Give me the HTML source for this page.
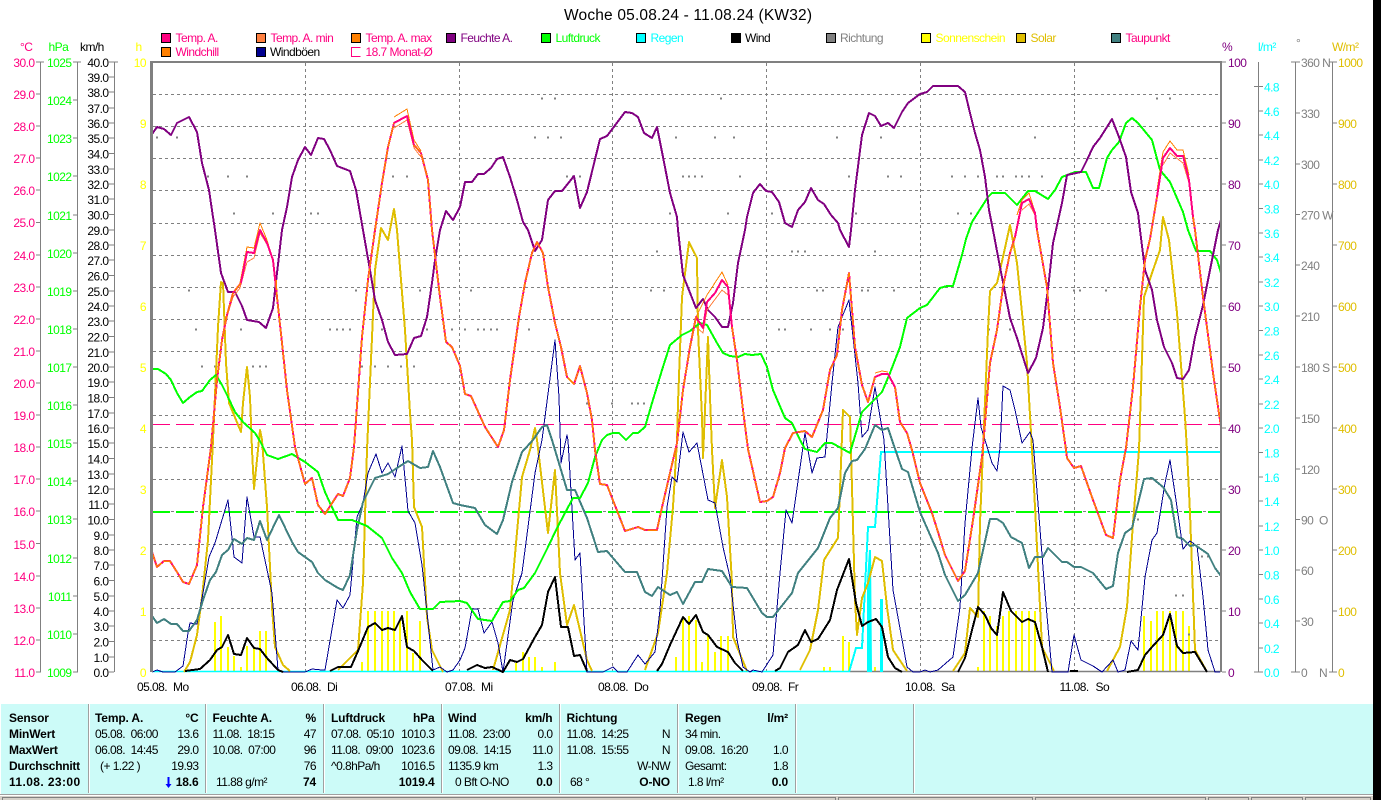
<!DOCTYPE html>
<html lang="de">
<head>
<meta charset="utf-8">
<title>Woche 05.08.24 - 11.08.24 (KW32)</title>
<style>
html,body{margin:0;padding:0;background:#fff}
svg{display:block;font-family:"Liberation Sans",sans-serif;font-size:12px}
text{white-space:pre;letter-spacing:-.55px}
.b text,text.b{font-weight:bold;letter-spacing:-.15px}
.c path,path.c{fill:none;stroke-linejoin:round}
.r text,text.r{text-anchor:end}
</style>
</head>
<body>
<svg width="1381" height="800" viewBox="0 0 1381 800" xmlns="http://www.w3.org/2000/svg">
<rect width="1381" height="800" fill="#fff"/>

<!-- title -->
<text x="564" y="20" fill="#000" textLength="248" style="font-size:15.5px;letter-spacing:0">Woche 05.08.24 - 11.08.24 (KW32)</text>

<!-- legend -->
<g stroke="#000" stroke-width="1" shape-rendering="crispEdges">
<rect x="161.5" y="33.5" width="9" height="9" fill="#ff0080"/>
<rect x="256.5" y="33.5" width="9" height="9" fill="#ff8040"/>
<rect x="351.5" y="33.5" width="9" height="9" fill="#ff8000"/>
<rect x="446.5" y="33.5" width="9" height="9" fill="#800080"/>
<rect x="541.5" y="33.5" width="9" height="9" fill="#00ff00"/>
<rect x="636.5" y="33.5" width="9" height="9" fill="#00ffff"/>
<rect x="731.5" y="33.5" width="9" height="9" fill="#000"/>
<rect x="826.5" y="33.5" width="9" height="9" fill="#808080"/>
<rect x="921.5" y="33.5" width="9" height="9" fill="#ffff00"/>
<rect x="1016.5" y="33.5" width="9" height="9" fill="#dfbe00"/>
<rect x="1111.5" y="33.5" width="9" height="9" fill="#408080"/>
<rect x="161.5" y="47.5" width="9" height="9" fill="#ff8000"/>
<rect x="256.5" y="47.5" width="9" height="9" fill="#000090"/>
</g>
<path d="M360.5 47.5h-9v9h9" fill="none" stroke="#ff0080" shape-rendering="crispEdges"/>
<text x="175.5" y="42" fill="#ff0080">Temp. A.</text>
<text x="270.5" y="42" fill="#ff0080">Temp. A. min</text>
<text x="365.5" y="42" fill="#ff0080">Temp. A. max</text>
<text x="460.5" y="42" fill="#800080">Feuchte A.</text>
<text x="555.5" y="42" fill="#00ff00">Luftdruck</text>
<text x="650.5" y="42" fill="#00ffff">Regen</text>
<text x="745" y="42" fill="#000">Wind</text>
<text x="840" y="42" fill="#808080">Richtung</text>
<text x="935.5" y="42" fill="#ffff00">Sonnenschein</text>
<text x="1030.5" y="42" fill="#dfbe00">Solar</text>
<text x="1125.5" y="42" fill="#ff0080">Taupunkt</text>
<text x="175.5" y="56" fill="#ff0080">Windchill</text>
<text x="270" y="56" fill="#000">Windböen</text>
<text x="365.5" y="56" fill="#ff0080">18.7 Monat-Ø</text>

<!-- axis headers -->
<text x="20" y="51" fill="#ff0080">°C</text>
<text x="48.5" y="51" fill="#00ff00">hPa</text>
<text x="80" y="51" fill="#000">km/h</text>
<text x="135.5" y="51" fill="#ffff00">h</text>
<text x="1222" y="51" fill="#800080">%</text>
<text x="1258" y="51" fill="#00ffff">l/m²</text>
<text x="1296" y="47" fill="#808080">°</text>
<text x="1332" y="51" fill="#dfbe00">W/m²</text>

<!-- axis lines and ticks -->
<path shape-rendering="crispEdges" fill="none" stroke="#808080" d="M40.5 62V672M36 62h8M36 94h5M36 126h5M36 158h5M36 190h5M36 222.500h5M36 255h5M36 287h5M36 319h5M36 351h5M36 383h5M36 415h5M36 447h5M36 479h5M36 511h5M36 543.500h5M36 576h5M36 608h5M36 640h5M36 672h5
M77.5 62V672M73 62h8M73 100h5M73 138h5M73 176h5M73 215h5M73 253h5M73 291h5M73 329h5M73 367h5M73 405h5M73 443h5M73 481h5M73 519h5M73 558h5M73 596h5M73 634h5M73 672h5
M114.5 62V672M109 62h9M109 77h5M109 92h5M109 108h5M109 123h5M109 138h5M109 153.500h5M109 169h5M109 184h5M109 199h5M109 214.500h5M109 230h5M109 245h5M109 260h5M109 275.500h5M109 291h5M109 306h5M109 321h5M109 336.500h5M109 352h5M109 367h5M109 382h5M109 397.500h5M109 413h5M109 428h5M109 443h5M109 458.500h5M109 474h5M109 489h5M109 504h5M109 519.500h5M109 535h5M109 550h5M109 565h5M109 580.500h5M109 596h5M109 611h5M109 626h5M109 641.500h5M109 657h5M109 672h5
M1222 62h4M1222 123h4M1222 184h4M1222 245h4M1222 306h4M1222 367h4M1222 428h4M1222 489h4M1222 550h4M1222 611h4M1222 672h4
M1258.500 62V672M1254 86.500h9M1259 111h4M1259 135h4M1259 160h4M1259 184h4M1259 208.500h4M1259 233h4M1259 257h4M1259 282h4M1259 306h4M1259 330.500h4M1259 355h4M1259 379h4M1259 404h4M1259 428h4M1259 452.500h4M1259 477h4M1259 501h4M1259 526h4M1259 550h4M1259 574.500h4M1259 599h4M1259 623h4M1259 648h4M1254 672h9
M1295.500 62V672M1291 62h9M1296 113h4M1296 164h4M1296 214.500h4M1296 265h4M1296 316h4M1296 367h4M1296 418h4M1296 469h4M1296 519.500h4M1296 570h4M1296 621h4M1291 672h9
M1332.500 62V672M1329 62h8M1333 123h4M1333 184h4M1333 245h4M1333 306h4M1333 367h4M1333 428h4M1333 489h4M1333 550h4M1333 611h4M1329 672h8"/>

<!-- left labels -->
<g transform="translate(0,5)">
<g class="r" fill="#ff0080">
<text x="34.500" y="62">30.0</text><text x="34.500" y="94">29.0</text><text x="34.500" y="126">28.0</text><text x="34.500" y="158">27.0</text><text x="34.500" y="190">26.0</text><text x="34.500" y="222">25.0</text><text x="34.500" y="255">24.0</text><text x="34.500" y="287">23.0</text><text x="34.500" y="319">22.0</text><text x="34.500" y="351">21.0</text><text x="34.500" y="383">20.0</text><text x="34.500" y="415">19.0</text><text x="34.500" y="447">18.0</text><text x="34.500" y="479">17.0</text><text x="34.500" y="511">16.0</text><text x="34.500" y="544">15.0</text><text x="34.500" y="576">14.0</text><text x="34.500" y="608">13.0</text><text x="34.500" y="640">12.0</text><text x="34.500" y="672">11.0</text>
</g>
<g class="r" fill="#00ff00">
<text x="71.500" y="62">1025</text><text x="71.500" y="100">1024</text><text x="71.500" y="138">1023</text><text x="71.500" y="176">1022</text><text x="71.500" y="215">1021</text><text x="71.500" y="253">1020</text><text x="71.500" y="291">1019</text><text x="71.500" y="329">1018</text><text x="71.500" y="367">1017</text><text x="71.500" y="405">1016</text><text x="71.500" y="443">1015</text><text x="71.500" y="481">1014</text><text x="71.500" y="519">1013</text><text x="71.500" y="558">1012</text><text x="71.500" y="596">1011</text><text x="71.500" y="634">1010</text><text x="71.500" y="672">1009</text>
</g>
<g class="r" fill="#000">
<text x="108.500" y="62">40.0</text><text x="108.500" y="77">39.0</text><text x="108.500" y="92">38.0</text><text x="108.500" y="108">37.0</text><text x="108.500" y="123">36.0</text><text x="108.500" y="138">35.0</text><text x="108.500" y="153.500">34.0</text><text x="108.500" y="169">33.0</text><text x="108.500" y="184">32.0</text><text x="108.500" y="199">31.0</text><text x="108.500" y="214.500">30.0</text><text x="108.500" y="230">29.0</text><text x="108.500" y="245">28.0</text><text x="108.500" y="260">27.0</text><text x="108.500" y="275.500">26.0</text><text x="108.500" y="291">25.0</text><text x="108.500" y="306">24.0</text><text x="108.500" y="321">23.0</text><text x="108.500" y="336.500">22.0</text><text x="108.500" y="352">21.0</text><text x="108.500" y="367">20.0</text><text x="108.500" y="382">19.0</text><text x="108.500" y="397.500">18.0</text><text x="108.500" y="413">17.0</text><text x="108.500" y="428">16.0</text><text x="108.500" y="443">15.0</text><text x="108.500" y="458.500">14.0</text><text x="108.500" y="474">13.0</text><text x="108.500" y="489">12.0</text><text x="108.500" y="504">11.0</text><text x="108.500" y="519.500">10.0</text><text x="108.500" y="535">9.0</text><text x="108.500" y="550">8.0</text><text x="108.500" y="565">7.0</text><text x="108.500" y="580.500">6.0</text><text x="108.500" y="596">5.0</text><text x="108.500" y="611">4.0</text><text x="108.500" y="626">3.0</text><text x="108.500" y="641.500">2.0</text><text x="108.500" y="657">1.0</text><text x="108.500" y="672">0.0</text>
</g>
<g class="r" fill="#ffff00">
<text x="146" y="62">10</text><text x="146" y="123">9</text><text x="146" y="184">8</text><text x="146" y="245">7</text><text x="146" y="306">6</text><text x="146" y="367">5</text><text x="146" y="428">4</text><text x="146" y="489">3</text><text x="146" y="550">2</text><text x="146" y="611">1</text><text x="146" y="672">0</text>
</g>
<!-- right labels -->
<g fill="#800080">
<text x="1228" y="62">100</text><text x="1228" y="123">90</text><text x="1228" y="184">80</text><text x="1228" y="245">70</text><text x="1228" y="306">60</text><text x="1228" y="367">50</text><text x="1228" y="428">40</text><text x="1228" y="489">30</text><text x="1228" y="550">20</text><text x="1228" y="611">10</text><text x="1228" y="672">0</text>
</g>
<g fill="#00ffff">
<text x="1264" y="86.500">4.8</text><text x="1264" y="111">4.6</text><text x="1264" y="135">4.4</text><text x="1264" y="160">4.2</text><text x="1264" y="184">4.0</text><text x="1264" y="208.500">3.8</text><text x="1264" y="233">3.6</text><text x="1264" y="257">3.4</text><text x="1264" y="282">3.2</text><text x="1264" y="306">3.0</text><text x="1264" y="330.500">2.8</text><text x="1264" y="355">2.6</text><text x="1264" y="379">2.4</text><text x="1264" y="404">2.2</text><text x="1264" y="428">2.0</text><text x="1264" y="452.500">1.8</text><text x="1264" y="477">1.6</text><text x="1264" y="501">1.4</text><text x="1264" y="526">1.2</text><text x="1264" y="550">1.0</text><text x="1264" y="574.500">0.8</text><text x="1264" y="599">0.6</text><text x="1264" y="623">0.4</text><text x="1264" y="648">0.2</text><text x="1264" y="672">0.0</text>
</g>
<g fill="#808080">
<text x="1301" y="62">360 N</text><text x="1301" y="113">330</text><text x="1301" y="164">300</text><text x="1301" y="214.500">270 W</text><text x="1301" y="265">240</text><text x="1301" y="316">210</text><text x="1301" y="367">180 S</text><text x="1301" y="418">150</text><text x="1301" y="469">120</text><text x="1301" y="519.500">90</text><text x="1319" y="519.500">O</text><text x="1301" y="570">60</text><text x="1301" y="621">30</text><text x="1301" y="672">0</text><text x="1319" y="672">N</text>
</g>
<g fill="#dfbe00">
<text x="1338" y="62">1000</text><text x="1338" y="123">900</text><text x="1338" y="184">800</text><text x="1338" y="245">700</text><text x="1338" y="306">600</text><text x="1338" y="367">500</text><text x="1338" y="428">400</text><text x="1338" y="489">300</text><text x="1338" y="550">200</text><text x="1338" y="611">100</text><text x="1338" y="672">0</text>
</g>
</g>

<!-- x labels -->
<g fill="#000">
<text x="137" y="691">05.08.</text><text x="173" y="691">Mo</text>
<text x="291" y="691">06.08.</text><text x="327" y="691">Di</text>
<text x="445" y="691">07.08.</text><text x="481" y="691">Mi</text>
<text x="598" y="691">08.08.</text><text x="634" y="691">Do</text>
<text x="752" y="691">09.08.</text><text x="788" y="691">Fr</text>
<text x="905" y="691">10.08.</text><text x="941" y="691">Sa</text>
<text x="1059.500" y="691">11.08.</text><text x="1095.500" y="691">So</text>
</g>

<!-- grid -->
<g stroke="#808080" stroke-width="1" stroke-dasharray="3 3" shape-rendering="crispEdges" fill="none">
<path d="M153 94.500H1220M153 126.500H1220M153 158.500H1220M153 190.500H1220M153 223.500H1220M153 255.500H1220M153 287.500H1220M153 319.500H1220M153 351.500H1220M153 383.500H1220M153 415.500H1220M153 447.500H1220M153 479.500H1220M153 511.500H1220M153 544.500H1220M153 576.500H1220M153 608.500H1220M153 640.500H1220"/>
<path d="M305.500 63V672M612.500 63V672M766.500 63V672M1074.500 63V672M459.500 63V672M920.500 63V672"/>
</g>

<!-- sunshine bars -->
<path shape-rendering="crispEdges" fill="none" stroke="#ffff00" stroke-width="2" d="M215 672V622M221 672V616M228 672V647M234 672V656M241 672V667M247 672V646M254 672V648M260 672V631M266 672V631M362 672V662M368 672V611M375 672V611M382 672V611M388 672V611M394 672V611M400 672V620M407 672V611M413 672V653M420 672V621M516 672V663M523 672V652M529 672V657M535 672V657M542 672V667M555 672V662M676 672V657M683 672V618M689 672V616M696 672V620M702 672V662M708 672V635M715 672V652M721 672V636M728 672V636M824 672V667M830 672V667M843 672V636M849 672V642M875 672V667M978 672V667M984 672V611M990 672V616M997 672V626M1003 672V616M1009 672V611M1016 672V611M1022 672V611M1029 672V611M1035 672V611M1144 672V616M1151 672V621M1157 672V611M1163 672V611M1170 672V611M1176 672V611M1183 672V611M1189 672V626"/>

<!-- direction dots -->
<path fill="none" stroke="#808080" stroke-width="2" shape-rendering="crispEdges" d="M541 98.500h2M554 98.500h2M720 98.500h2M1156 98.500h2M1169 98.500h2
M156 137.500h2M176 137.500h2M534 137.500h2M547 137.500h2M560 137.500h2M675 137.500h2M714 137.500h2M733 137.500h2M836 137.500h2M880 137.500h2M1034 137.500h2
M207 176.500h2M227 176.500h2M246 176.500h2M392 176.500h2M406 176.500h2M566 176.500h2M572 176.500h2M579 176.500h2M682 176.500h2M688 176.500h2M694 176.500h2M701 176.500h2M739 176.500h2M848 176.500h2M887 176.500h2M900 176.500h2M951 176.500h2M964 176.500h2M977 176.500h2M996 176.500h2M1002 176.500h2M1015 176.500h2M1021 176.500h2M1028 176.500h2M1041 176.500h2
M233 213.500h2M272 213.500h2M310 213.500h2M317 213.500h2M669 213.500h2M727 213.500h2M771 213.500h2M855 213.500h2M957 213.500h2M970 213.500h2
M656 251.500h2M791 251.500h2M797 251.500h2M804 251.500h2M874 251.500h2
M188 290.500h2M355 290.500h2M419 290.500h2M470 290.500h2M650 290.500h2M663 290.500h2M816 290.500h2M822 290.500h2M861 290.500h2M867 290.500h2M893 290.500h2M1073 290.500h2M1079 290.500h2M1105 290.500h2
M195 329.500h2M240 329.500h2M329 329.500h2M336 329.500h2M342 329.500h2M349 329.500h2M381 329.500h2M426 329.500h2M451 329.500h2M464 329.500h2M477 329.500h2M483 329.500h2M490 329.500h2M496 329.500h2M528 329.500h2M778 329.500h2M784 329.500h2M810 329.500h2M829 329.500h2M842 329.500h2M988 329.500h2M1009 329.500h2
M201 366.500h2M214 366.500h2M252 366.500h2M259 366.500h2M265 366.500h2M361 366.500h2M374 366.500h2M387 366.500h2M400 366.500h2M413 366.500h2
M586 403.500h2M611 403.500h2M631 403.500h2M637 403.500h2M643 403.500h2
M1137 519.500h2M1201 556.500h2M1207 556.500h2M1175 595.500h2M1182 595.500h2M1188 634.500h2"/>

<!-- average lines -->
<path d="M152 424.500H1221" stroke="#ff0080" stroke-width="1" stroke-dasharray="18 6" fill="none" shape-rendering="crispEdges"/>
<path d="M152 512H1221" stroke="#00ff00" stroke-width="2" stroke-dasharray="18 6" fill="none" shape-rendering="crispEdges"/>

<!-- rain -->
<path fill="none" stroke="#00ffff" stroke-width="1.500" d="M152 671.500H850"/>
<path fill="none" stroke="#808080" stroke-width="1.500" d="M850 671.500H1221"/>
<path fill="none" stroke="#00ffff" stroke-width="2" shape-rendering="crispEdges" d="M849 672L856 648H862L868 527H875L881 452H1221"/>
<path fill="#00ffff" d="M867 672V580L869 550L871 550L872 672ZM880 672V599H883V672Z"/>

<g class="c" stroke-linejoin="round" shape-rendering="crispEdges">
<!-- solar -->
<path stroke="#dfbe00" stroke-width="2" d="M184 672L190 662L197 635L202 597L208 540L213 440L218 327L221 282L223 283L226 363L229 403L241 432L243 403L247 367L250 397L252 450L254 489L260 430L262 440L267 507L272 607L275 647L283 665L290 671
M338 670L358 650L363 583L367 450L375 270L381 228L388 240L394 209L397 230L405 330L410 413L412 440L414 507L422 527L427 617L432 650L443 672
M493 670L510 610L522 477L530 450L535 428L537 440L548 533L555 470L560 573L567 625L574 605L587 660L592 671
M645 670L658 633L667 573L673 507L677 440L678 403L682 297L689 242L697 258L698 330L702 417L703 458L708 337L710 397L712 450L715 508L722 460L727 497L732 583L733 637L747 671
M800 670L810 650L818 610L824 560L838 538L840 490L843 410L850 417L851 450L855 600L857 635L862 598L868 583L875 557L882 561L887 607L893 650L907 671
M953 671L965 653L970 608L978 617L980 523L983 450L988 330L990 291L997 283L1003 257L1010 225L1017 263L1023 323L1027 363L1032 450L1035 507L1042 647L1054 671
M1107 671L1120 647L1127 607L1133 523L1139 450L1144 297L1152 273L1160 250L1163 217L1169 240L1177 313L1185 417L1187 450L1190 513L1195 650L1207 672"/>
<!-- gusts -->
<path stroke="#000090" stroke-width="1" d="M152 672L157 670L163 672L175 672L183 666L188 633L190 623L197 624L203 593L209 557L215 543L228 500L234 557L242 563L247 497L254 537L260 537L272 593L278 670L283 672L305 672L312 669L322 670L325 670L337 600L343 608L350 595L357 517L363 503L368 473L376 454L382 473L388 463L395 477L402 446L408 511L415 523L422 565L428 622L433 670L440 667L447 672L453 670L460 660L465 648L472 609L478 609L484 633L492 622L498 643L503 672L513 600L522 573L528 527L535 473L542 440L555 340L559 397L561 463L567 435L568 440L575 560L580 553L587 672L603 672L613 667L618 672L627 672L638 655L645 664L655 652L660 610L667 507L672 477L677 482L683 432L689 452L697 443L708 500L715 503L723 547L730 577L737 640L743 667L750 672L753 670L762 672L773 655L780 573L786 510L792 523L805 433L812 473L817 458L825 457L832 383L838 327L849 300L858 383L862 437L868 430L875 387L884 440L888 507L893 590L907 667L913 672L920 672L925 670L930 672L938 670L953 657L960 607L965 523L972 448L978 398L981 427L985 440L992 463L997 471L1000 448L1003 386L1010 390L1015 410L1022 443L1030 432L1033 440L1045 593L1052 672L1068 672L1074 635L1081 660L1093 666L1102 672L1113 660L1118 672L1125 670L1131 641L1138 650L1145 577L1152 540L1157 533L1165 483L1170 460L1177 507L1183 549L1190 541L1197 546L1203 597L1208 650L1215 672L1220 672"/>
<!-- dew point -->
<path stroke="#408080" stroke-width="2" d="M152 616L157 623L164 619L171 624L177 624L183 631L189 631L197 620L203 600L210 580L216 572L222 555L228 550L234 539L242 544L247 538L254 540L260 521L267 540L279 515L292 542L298 552L312 562L318 573L325 580L338 588L343 590L350 575L357 530L363 502L375 478L388 474L397 468L408 461L420 468L428 467L433 451L440 467L453 503L460 505L475 508L485 525L497 534L503 520L512 482L522 452L533 440L542 427L547 425L552 440L567 490L575 490L587 518L598 552L607 551L625 572L637 572L645 592L652 596L658 587L670 595L677 592L683 604L695 582L702 582L708 569L722 571L732 587L747 588L762 613L767 617L773 617L792 593L798 573L818 548L830 518L838 508L845 473L852 461L857 460L865 449L875 425L882 430L888 428L892 440L902 469L908 472L920 512L938 553L945 575L958 601L965 595L978 573L990 519L997 519L1003 523L1011 537L1022 543L1029 568L1035 557L1043 557L1048 548L1062 562L1067 562L1074 567L1081 567L1093 573L1106 589L1113 586L1118 553L1125 533L1132 528L1144 479L1152 478L1163 487L1171 500L1177 537L1183 539L1190 546L1195 545L1208 554L1215 568L1221 576"/>
<!-- pressure -->
<path stroke="#00ff00" stroke-width="2" d="M152 369L158 369L166 374L171 380L177 393L183 403L190 397L197 392L202 391L210 380L216 375L222 385L228 397L235 412L243 422L255 433L260 441L267 455L278 459L292 454L305 462L318 472L325 492L330 503L338 520L352 520L367 526L382 538L392 558L402 573L410 592L420 609L433 609L440 602L460 601L467 603L478 619L492 621L503 602L510 601L518 590L524 588L535 573L548 547L557 528L573 498L580 498L588 483L595 457L602 440L607 435L613 433L619 433L626 440L633 433L638 433L645 427L652 403L662 370L670 345L682 335L690 331L700 323L707 325L717 343L723 353L730 356L738 357L745 354L752 355L761 354L767 367L773 390L785 418L792 423L800 440L805 449L817 452L825 443L832 443L850 453L862 412L882 392L890 373L900 347L907 318L920 308L927 305L940 288L947 286L953 286L962 255L966 239L972 222L988 197L992 193L1005 193L1017 205L1028 191L1035 191L1048 199L1055 190L1062 177L1075 172L1086 172L1093 188L1099 188L1107 158L1112 150L1119 142L1126 123L1132 118L1138 123L1152 140L1160 170L1170 182L1183 212L1188 230L1196 251L1210 251L1217 260L1221 273"/>
<!-- humidity -->
<path stroke="#800080" stroke-width="2" d="M152 134L157 127L164 129L171 135L177 123L189 117L197 132L202 163L209 190L213 217L215 230L221 273L228 292L235 292L242 306L247 320L259 322L266 328L273 308L277 273L282 230L287 207L292 177L298 160L305 147L311 155L318 138L324 139L330 150L337 166L350 171L356 190L360 213L363 230L370 270L375 300L382 320L388 342L395 355L407 354L414 338L421 336L427 317L432 283L435 260L440 230L446 211L453 220L460 207L465 182L472 182L478 174L484 174L491 168L497 159L503 157L510 177L517 200L523 222L528 230L535 251L542 240L548 200L555 191L562 191L574 176L580 208L587 192L600 139L607 136L619 120L625 112L632 113L638 117L644 133L652 138L657 127L663 157L670 193L677 217L678 230L683 275L696 308L703 299L708 310L715 317L722 327L728 327L733 303L738 263L745 230L747 217L753 193L760 184L766 191L772 192L779 202L785 223L792 227L798 210L805 202L811 188L818 200L824 204L831 215L838 223L840 230L849 247L851 230L855 190L862 135L869 113L875 116L881 126L888 123L894 128L902 112L908 103L920 94L927 92L933 86L958 86L965 92L970 113L975 133L980 150L985 177L989 210L993 230L1000 267L1010 318L1017 338L1028 373L1036 358L1043 328L1049 280L1053 243L1056 230L1062 203L1067 175L1081 172L1087 160L1093 147L1100 138L1107 127L1112 119L1119 137L1126 157L1131 192L1138 213L1140 230L1145 270L1152 290L1157 320L1164 347L1172 363L1177 378L1183 379L1189 370L1195 337L1203 305L1212 260L1218 230L1221 220"/>
<!-- temp min / max -->
<path stroke="#ff8000" stroke-width="1" d="M240 283L247 247L254 248L260 223L267 240L273 260M394 117L407 109L414 140L421 151M696 317L707 295L722 272L728 285M1017 215L1022 200L1029 193L1035 212M1157 190L1163 152L1170 141L1177 150L1183 150L1189 175M875 373L882 371L888 372"/>
<path stroke="#ff8040" stroke-width="1" d="M226 320L233 297L240 288L247 262L254 258L260 233L268 246L273 262M394 128L407 120L414 148L421 157M696 327L703 333L707 310L722 290L728 295M1022 210L1029 204L1035 215M1163 165L1170 153L1183 163L1189 183"/>
<!-- temp -->
<path stroke="#ff0080" stroke-width="2" d="M152 552L157 567L164 561L170 561L177 572L183 582L189 584L197 565L203 507L211 447L217 380L222 340L227 315L233 293L241 283L247 252L254 253L260 230L267 243L273 260L277 297L282 343L287 390L295 447L305 484L312 478L318 505L325 514L338 494L343 496L350 478L354 447L362 337L368 280L375 230L382 183L388 147L394 123L407 116L414 145L421 153L428 180L432 230L440 297L446 342L452 347L460 366L465 394L471 396L485 427L498 447L504 430L510 380L519 317L525 283L532 253L537 242L543 253L548 287L555 323L561 347L567 377L574 384L580 366L587 393L592 420L595 450L600 484L607 485L625 531L638 527L645 530L657 530L663 503L677 443L683 390L690 347L696 317L703 328L707 302L715 293L722 280L728 287L732 327L737 360L743 410L748 449L760 502L767 501L773 497L780 473L785 448L793 433L805 431L812 437L823 410L830 370L837 355L842 310L849 273L855 347L862 385L868 402L875 377L882 374L888 374L895 387L900 422L907 433L912 450L920 483L932 513L938 532L945 555L958 581L965 571L973 520L982 457L983 447L990 363L997 330L1003 287L1010 253L1015 237L1022 203L1029 199L1035 213L1037 230L1047 287L1053 363L1060 407L1066 450L1067 458L1074 468L1081 466L1093 500L1106 535L1113 538L1120 480L1126 448L1133 387L1140 307L1145 260L1150 239L1157 197L1163 158L1170 148L1177 156L1183 156L1189 180L1193 217L1195 230L1203 297L1213 373L1221 427"/>
<!-- windchill -->
<path stroke="#ff8000" stroke-width="1.500" stroke-dasharray="10 2" d="M152 552L157 567L164 561L170 561L177 572L183 582L189 584L197 565L203 507L211 447L217 380L222 340L227 315L233 293L241 283M276 280L277 297L282 343L287 390L295 447L305 484L312 478L318 505L325 514L338 494L343 496L350 478L354 447L362 337L368 280L375 230L382 183L388 147L394 123M414 145L421 153L428 180L432 230L440 297L446 342L452 347L460 366L465 394L471 396L485 427L498 447L504 430L510 380L519 317L525 283L532 253L537 242L543 253L548 287L555 323L561 347L567 377L574 384L580 366L587 393L592 420L595 450L600 484L607 485L625 531L638 527L645 530L657 530L663 503L677 443L683 390L690 347L696 317M732 327L737 360L743 410L748 449L760 502L767 501L773 497L780 473L785 448L793 433L805 431L812 437L823 410L830 370L837 355L842 310L849 273L855 347L862 385L868 402L875 377M895 387L900 422L907 433L912 450L920 483L932 513L938 532L945 555L958 581L965 571L973 520L982 457L983 447L990 363L997 330L1003 287L1010 253L1015 237M1037 230L1047 287L1053 363L1060 407L1066 450L1067 458L1074 468L1081 466L1093 500L1106 535L1113 538L1120 480L1126 448L1133 387L1140 307L1145 260L1150 239L1157 197M1193 217L1195 230L1203 297L1213 373L1221 427"/>
<!-- wind -->
<path stroke="#000" stroke-width="2" d="M185 671L200 669L210 660L217 650L222 647L228 635L234 654L241 655L247 638L254 648L260 649L267 658L278 670L283 672M330 671L338 667L351 667L358 651L368 627L375 623L382 630L388 628L395 630L402 616L407 647L414 651L422 660L433 671M467 670L477 665L485 668L492 667L503 672L510 660L517 662L523 659L535 637L542 625L548 592L555 577L561 627L568 627L574 656L580 655L587 671M657 671L662 664L670 645L683 617L689 624L696 615L703 632L708 635L717 647L728 652L735 663L743 671M775 671L780 668L788 652L798 645L805 630L811 642L818 639L830 620L837 590L849 559L856 603L862 626L868 622L876 619L882 627L888 657L895 668L902 672M958 672L965 658L972 630L978 607L985 615L991 628L997 635L1003 592L1011 611L1022 622L1028 619L1035 622L1042 647L1048 672M1070 671L1078 671M1127 672L1138 670L1145 655L1152 647L1163 635L1170 614L1177 646L1183 653L1195 652L1207 672"/>
</g>

<!-- chart frame -->
<path shape-rendering="crispEdges" fill="#808080" d="M150 61H1222V63H153V672H150ZM1220 61H1222V672H1220Z"/>

<!-- bottom panel -->
<rect x="1" y="704" width="1372" height="90" fill="#ccfbf8"/>
<g shape-rendering="crispEdges">
<path stroke="#a0a0a0" d="M88.500 704V793M205.500 704V793M323.500 704V793M559.500 704V793M677.500 704V793M795.500 704V793M913.500 704V793M441.500 704V793"/>
<path stroke="#fff" d="M89.500 704V793M206.500 704V793M324.500 704V793M560.500 704V793M678.500 704V793M796.500 704V793M914.500 704V793M442.500 704V793"/>
</g>

<g class="b" fill="#000">
<text x="9" y="722">Sensor</text><text x="9" y="738">MinWert</text><text x="9" y="754">MaxWert</text><text x="9" y="770" textLength="71">Durchschnitt</text><text x="9" y="786" textLength="71">11.08. 23:00</text>
<text x="95" y="722">Temp. A.</text><text x="212.500" y="722">Feuchte A.</text><text x="331" y="722">Luftdruck</text><text x="448" y="722">Wind</text><text x="566.500" y="722">Richtung</text><text x="685" y="722">Regen</text>
<g class="r">
<text x="198.500" y="722">°C</text><text x="316" y="722">%</text><text x="434.500" y="722">hPa</text><text x="552.500" y="722">km/h</text><text x="788" y="722">l/m²</text>
<text x="198.500" y="786">18.6</text><text x="316" y="786">74</text><text x="434.500" y="786">1019.4</text><text x="552.500" y="786">0.0</text><text x="670" y="786">O-NO</text><text x="788" y="786">0.0</text>
</g>
</g>
<path fill="#0000ff" d="M167.500 777h2v7h2l-3 4l-3-4h2z"/>
<g fill="#000">
<text x="95" y="738">05.08.  06:00</text><text x="95" y="754">06.08.  14:45</text><text x="100" y="770">(+ 1.22 )</text>
<text x="212.500" y="738">11.08.  18:15</text><text x="212.500" y="754">10.08.  07:00</text><text x="216" y="786">11.88 g/m²</text>
<text x="331" y="738">07.08.  05:10</text><text x="331" y="754">11.08.  09:00</text><text x="331" y="770">^0.8hPa/h</text>
<text x="448" y="738">11.08.  23:00</text><text x="448" y="754">09.08.  14:15</text><text x="448" y="770">1135.9 km</text><text x="455" y="786">0 Bft O-NO</text>
<text x="566.500" y="738">11.08.  14:25</text><text x="566.500" y="754">11.08.  15:55</text><text x="570" y="786">68 °</text>
<text x="685" y="738">34 min.</text><text x="685" y="754">09.08.  16:20</text><text x="685" y="770">Gesamt:</text><text x="688" y="786">1.8 l/m²</text>
<g class="r">
<text x="198.500" y="738">13.6</text><text x="198.500" y="754">29.0</text><text x="198.500" y="770">19.93</text>
<text x="316" y="738">47</text><text x="316" y="754">96</text><text x="316" y="770">76</text>
<text x="434.500" y="738">1010.3</text><text x="434.500" y="754">1023.6</text><text x="434.500" y="770">1016.5</text>
<text x="552.500" y="738">0.0</text><text x="552.500" y="754">11.0</text><text x="552.500" y="770">1.3</text>
<text x="670" y="738">N</text><text x="670" y="754">N</text><text x="670" y="770">W-NW</text>
<text x="788" y="754">1.0</text><text x="788" y="770">1.8</text>
</g>
</g>

<!-- status bar -->
<rect x="0" y="794" width="1373" height="6" fill="#d4d0c8"/>
<g shape-rendering="crispEdges" fill="none">
<path stroke="#a0a0a0" d="M0 794.500H1373"/>
<path stroke="#fff" d="M0 795.500H1373"/>
<path stroke="#808080" d="M2.500 800V797.500H835.500V800M838.500 800V797.500H1032.500V800M1035.500 800V797.500H1205.500V800M1208.500 800V797.500H1248.500V800M1251.500 800V797.500H1302.500V800M1305.500 800V797.500H1370.500V800"/>
</g>

<!-- right black edge -->
<rect x="1373" y="0" width="8" height="800" fill="#000"/>
</svg>
</body>
</html>
